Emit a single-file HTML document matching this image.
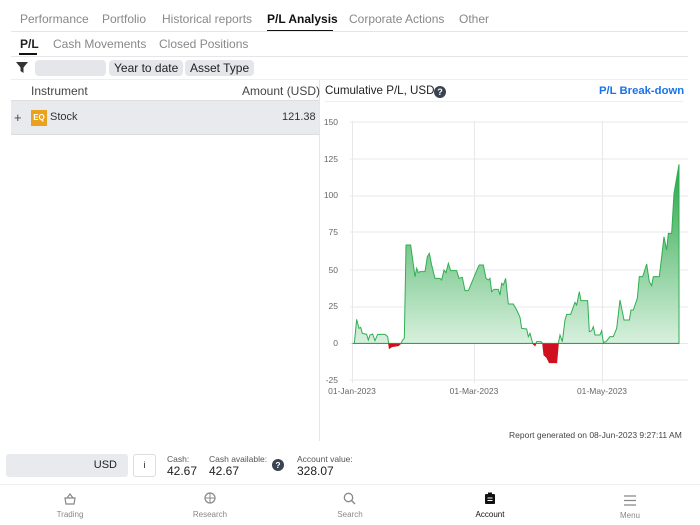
<!DOCTYPE html><html><head><style>
*{margin:0;padding:0;box-sizing:border-box}
body{width:700px;height:525px;background:#fff;font-family:"Liberation Sans",sans-serif;color:#222;position:relative;overflow:hidden}
.a{position:absolute;white-space:nowrap}
.g{color:#888}
.pill{position:absolute;background:#e4e6ea;border-radius:4px;height:16px;font-size:12px;line-height:16px;padding:0 5px;color:#222;white-space:nowrap}
.nav{position:absolute;top:510px;font-size:8px;color:#888;text-align:center;width:60px}
</style></head><body>
<div class="a g" style="left:20px;top:12px;font-size:12px">Performance</div>
<div class="a g" style="left:102px;top:12px;font-size:12px">Portfolio</div>
<div class="a g" style="left:162px;top:12px;font-size:12px">Historical reports</div>
<div class="a" style="left:267px;top:12px;font-size:12px;font-weight:bold;color:#111">P/L Analysis</div>
<div class="a g" style="left:349px;top:12px;font-size:12px">Corporate Actions</div>
<div class="a g" style="left:459px;top:12px;font-size:12px">Other</div>
<div class="a" style="left:267px;top:30px;width:66px;height:2px;background:#111"></div>
<div class="a" style="left:11px;top:31px;width:677px;height:1px;background:#e6e6e6"></div>
<div class="a" style="left:20px;top:37px;font-size:12px;font-weight:bold">P/L</div>
<div class="a g" style="left:53px;top:37px;font-size:12px">Cash Movements</div>
<div class="a g" style="left:159px;top:37px;font-size:12px">Closed Positions</div>
<div class="a" style="left:19px;top:53px;width:18px;height:2px;background:#111"></div>
<div class="a" style="left:11px;top:56px;width:677px;height:1px;background:#e6e6e6"></div>
<svg class="a" style="left:15px;top:61px" width="14" height="13"><path d="M1 1H13L8.5 6.5V12L5.5 10V6.5Z" fill="#333"/></svg>
<div class="pill" style="left:35px;top:60px;width:71px"></div>
<div class="pill" style="left:109px;top:60px">Year to date</div>
<div class="pill" style="left:185px;top:60px">Asset Type</div>
<div class="a" style="left:11px;top:79px;width:677px;height:1px;background:#eee"></div>
<div class="a" style="left:319px;top:80px;width:1px;height:361px;background:#e6e6e6"></div>
<div class="a" style="left:31px;top:84px;font-size:12px;color:#444">Instrument</div>
<div class="a" style="left:242px;top:84px;font-size:12px;color:#444">Amount (USD)</div>
<div class="a" style="left:11px;top:100px;width:308px;height:35px;background:#e8eaed;border-top:1px solid #ddd;border-bottom:1px solid #ddd"></div>
<div class="a" style="left:14px;top:110px;font-size:13px;color:#444">+</div>
<div class="a" style="left:31px;top:110px;width:16px;height:16px;background:#e8a21e;color:#fff;font-size:8px;font-weight:bold;text-align:center;line-height:16px">EQ</div>
<div class="a" style="left:50px;top:111px;font-size:11px;color:#333">Stock</div>
<div class="a" style="left:282px;top:111px;font-size:11px;color:#333">121.38</div>
<div class="a" style="left:325px;top:84px;font-size:11.6px;color:#222">Cumulative P/L, USD</div>
<div class="a" style="left:434px;top:86px;width:12px;height:12px;border-radius:50%;background:#3a4350;color:#fff;font-size:9px;font-weight:bold;text-align:center;line-height:12px">?</div>
<div class="a" style="left:599px;top:85px;font-size:11.3px;font-weight:bold;color:#1a73e8">P/L Break-down</div>
<div class="a" style="left:325px;top:101px;width:358px;height:1px;background:#eee"></div>
<svg class="a" style="left:0;top:0" width="700" height="440">
<defs>
<linearGradient id="gg" gradientUnits="userSpaceOnUse" x1="0" y1="250" x2="0" y2="790"><stop offset="0" stop-color="#27a546"/><stop offset="1" stop-color="#d8f0de"/></linearGradient>
<clipPath id="up" clipPathUnits="userSpaceOnUse"><rect x="0" y="0" width="1200" height="790"/></clipPath>
<clipPath id="dn" clipPathUnits="userSpaceOnUse"><rect x="0" y="790" width="1200" height="200"/></clipPath>
</defs>
<g font-size="8.5" fill="#666" font-family="Liberation Sans">
<text x="338" y="125" text-anchor="end">150</text><text x="338" y="162" text-anchor="end">125</text><text x="338" y="198" text-anchor="end">100</text><text x="338" y="235" text-anchor="end">75</text><text x="338" y="273" text-anchor="end">50</text><text x="338" y="309" text-anchor="end">25</text><text x="338" y="346" text-anchor="end">0</text><text x="338" y="383" text-anchor="end">-25</text>
<text x="352" y="394" text-anchor="middle">01-Jan-2023</text><text x="474" y="394" text-anchor="middle">01-Mar-2023</text><text x="602" y="394" text-anchor="middle">01-May-2023</text>
</g>
<g stroke="#e8e8ec" stroke-width="1">
<path d="M350 122H688M350 159H688M350 196H688M350 232H688M350 270H688M350 307H688M350 343.5H688M350 380H688M352.5 121V383M474.5 121V383M602.5 121V383"/>
</g>
<g transform="translate(320,80) scale(0.33333)">
<path clip-path="url(#up)" fill="url(#gg)" stroke="#2fae52" stroke-width="3" d="M97 790L103 790L110 718L117 745L122 742L127 760L140 763L145 780L150 765L158 762L165 782L173 763L195 763L203 770L208 805L215 800L235 797L243 790L248 780L253 775L258 495L272 495L285 590L290 565L295 578L300 575L315 575L322 530L328 520L335 555L345 595L360 595L365 600L372 570L378 578L385 550L392 572L410 572L417 595L427 592L435 632L445 632L475 560L478 555L490 555L498 595L505 600L510 595L515 635L522 628L535 628L540 645L545 610L550 615L557 595L565 672L580 672L590 690L600 712L605 745L620 747L625 770L630 760L638 790L645 797L650 785L663 785L668 790L672 825L680 832L688 848L710 848L715 790L720 765L727 785L735 720L740 703L752 703L765 667L770 675L778 635L783 662L803 662L808 755L815 752L820 740L825 765L840 765L845 752L850 787L858 785L870 770L880 770L890 745L900 660L912 720L928 720L933 690L940 690L952 655L958 590L968 590L980 552L988 605L995 617L1000 590L1018 590L1032 470L1040 510L1045 460L1055 460L1062 340L1077 253L1077 790Z"/>
<path clip-path="url(#dn)" fill="#d0101e" stroke="#d0101e" stroke-width="3" d="M97 790L103 790L110 718L117 745L122 742L127 760L140 763L145 780L150 765L158 762L165 782L173 763L195 763L203 770L208 805L215 800L235 797L243 790L248 780L253 775L258 495L272 495L285 590L290 565L295 578L300 575L315 575L322 530L328 520L335 555L345 595L360 595L365 600L372 570L378 578L385 550L392 572L410 572L417 595L427 592L435 632L445 632L475 560L478 555L490 555L498 595L505 600L510 595L515 635L522 628L535 628L540 645L545 610L550 615L557 595L565 672L580 672L590 690L600 712L605 745L620 747L625 770L630 760L638 790L645 797L650 785L663 785L668 790L672 825L680 832L688 848L710 848L715 790L720 765L727 785L735 720L740 703L752 703L765 667L770 675L778 635L783 662L803 662L808 755L815 752L820 740L825 765L840 765L845 752L850 787L858 785L870 770L880 770L890 745L900 660L912 720L928 720L933 690L940 690L952 655L958 590L968 590L980 552L988 605L995 617L1000 590L1018 590L1032 470L1040 510L1045 460L1055 460L1062 340L1077 253L1077 790Z"/>
</g>
</svg>
<div class="a" style="left:509px;top:430px;font-size:8.5px;color:#444">Report generated on 08-Jun-2023 9:27:11 AM</div>
<div class="a" style="left:6px;top:454px;width:122px;height:23px;background:#e8eaed;border-radius:3px;font-size:11px;text-align:right;padding-right:11px;line-height:23px">USD</div>
<div class="a" style="left:133px;top:454px;width:23px;height:23px;border:1px solid #ddd;border-radius:3px;font-size:9px;text-align:center;line-height:21px">i</div>
<div class="a" style="left:167px;top:454px;font-size:8.5px;color:#555">Cash:</div>
<div class="a" style="left:167px;top:464px;font-size:12px">42.67</div>
<div class="a" style="left:209px;top:454px;font-size:8.5px;color:#555">Cash available:</div>
<div class="a" style="left:209px;top:464px;font-size:12px">42.67</div>
<div class="a" style="left:272px;top:459px;width:12px;height:12px;border-radius:50%;background:#3a4350;color:#fff;font-size:8.5px;font-weight:bold;text-align:center;line-height:12px">?</div>
<div class="a" style="left:297px;top:454px;font-size:8.5px;color:#555">Account value:</div>
<div class="a" style="left:297px;top:464px;font-size:12px">328.07</div>
<div class="a" style="left:0;top:484px;width:700px;height:1px;background:#eee"></div>
<svg class="a" style="left:64px;top:493px" width="12" height="12"><path d="M1 5H11L10 11H2Z M3 5L6 1L9 5" fill="none" stroke="#888" stroke-width="1.2"/></svg>
<svg class="a" style="left:204px;top:492px" width="13" height="13"><circle cx="6" cy="6" r="5" fill="none" stroke="#888" stroke-width="1.2"/><path d="M1 6H11M6 1V11" stroke="#888"/></svg>
<svg class="a" style="left:343px;top:492px" width="13" height="13"><circle cx="5.5" cy="5.5" r="4.2" fill="none" stroke="#888" stroke-width="1.3"/><path d="M8.5 8.5L12 12" stroke="#888" stroke-width="1.4"/></svg>
<svg class="a" style="left:484px;top:492px" width="12" height="13"><rect x="1" y="2" width="10" height="10" rx="1" fill="#111"/><rect x="4" y="0.5" width="4" height="3" fill="#111"/><path d="M3.5 6H8.5M3.5 8.5H8.5" stroke="#fff"/></svg>
<svg class="a" style="left:624px;top:495px" width="12" height="11"><path d="M0 1H12M0 5.5H12M0 10H12" stroke="#888" stroke-width="1.3"/></svg>
<div class="nav" style="left:40px">Trading</div>
<div class="nav" style="left:180px">Research</div>
<div class="nav" style="left:320px">Search</div>
<div class="nav" style="left:460px;color:#111">Account</div>
<div class="nav" style="left:600px;top:511px">Menu</div>
</body></html>
